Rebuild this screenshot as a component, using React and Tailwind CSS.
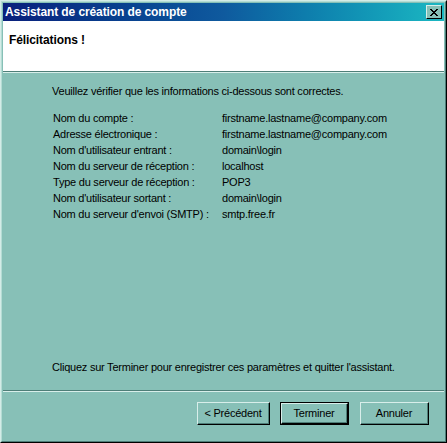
import React from 'react';

const ROWS = [
  ['Nom du compte :', 'firstname.lastname@company.com'],
  ['Adresse électronique :', 'firstname.lastname@company.com'],
  ["Nom d'utilisateur entrant :", 'domain\\login'],
  ['Nom du serveur de réception :', 'localhost'],
  ['Type du serveur de réception :', 'POP3'],
  ["Nom d'utilisateur sortant :", 'domain\\login'],
  ["Nom du serveur d'envoi (SMTP) :", 'smtp.free.fr'],
];

function WinButton({ children, isDefault, wide }) {
  return (
    <div className={isDefault ? 'border border-black' : ''}>
      <div className="border-t border-l border-[#d8eeea] border-r border-b border-r-black border-b-black">
        <div
          className={
            (isDefault ? 'w-[65px] h-[19px] ' : wide ? 'w-[71px] h-[21px] ' : 'w-[67px] h-[21px] ') +
            'flex items-center justify-center border-r border-b border-[#4e7e78] text-black'
          }
        >
          {children}
        </div>
      </div>
    </div>
  );
}

export default function App() {
  return (
    <div
      className="w-[447px] h-[443px] bg-[#87c0b7] border-t border-l border-[#d4ece7] border-r border-b border-r-black border-b-black text-[11px] tracking-[-0.23px] text-black"
      style={{ fontFamily: '"Liberation Sans", Arial, sans-serif' }}
    >
      <div className="w-full h-full border-t border-l border-[#b4dcd4] border-r border-b border-r-[#4e7e78] border-b-[#4e7e78] p-px flex flex-col">
        {/* Title bar */}
        <div className="h-[18px] flex items-center justify-between pl-[2px] pr-[2px] bg-gradient-to-r from-[#0a1f7c] via-[#0f5a9e] to-[#1cb8c2]">
          <span className="text-white font-bold text-[12px] leading-none tracking-[-0.1px]">
            Assistant de création de compte
          </span>
          <div className="w-[16px] h-[14px] bg-[#87c0b7] border-t border-l border-[#d8eeea] border-r border-b border-r-black border-b-black flex items-center justify-center">
            <svg width="8" height="7" viewBox="0 0 8 7" shapeRendering="crispEdges">
              <path d="M0 0h2v1H0zM6 0h2v1H6zM1 1h2v1H1zM5 1h2v1H5zM2 2h4v1H2zM3 3h2v1H3zM2 4h4v1H2zM1 5h2v1H1zM5 5h2v1H5zM0 6h2v1H0zM6 6h2v1H6z" fill="#000" />
            </svg>
          </div>
        </div>

        {/* Header */}
        <div className="h-[51px] bg-white pl-[6px] pt-[10px] border-b border-[#4e7e78]">
          <div className="font-bold text-[12px] tracking-[-0.1px]">Félicitations !</div>
        </div>
        <div className="h-px bg-[#d8eeea]" />

        {/* Body */}
        <div className="flex-1 flex flex-col pl-[49px] pt-[10px]">
          <div>Veuillez vérifier que les informations ci-dessous sont correctes.</div>
          <div className="mt-[10px] grid grid-cols-[169px_1fr] pl-[1px]">
            {ROWS.map(([label, value]) => (
              <React.Fragment key={label}>
                <div className="h-[16px] leading-[16px]">{label}</div>
                <div className="h-[16px] leading-[16px]">{value}</div>
              </React.Fragment>
            ))}
          </div>
          <div className="mt-auto mb-[15px]">
            Cliquez sur Terminer pour enregistrer ces paramètres et quitter l'assistant.
          </div>
        </div>

        {/* Footer */}
        <div className="h-px bg-[#4e7e78]" />
        <div className="h-px bg-[#d8eeea]" />
        <div className="h-[48px] flex justify-end items-start pt-[10px] pr-[15px]">
          <WinButton wide>&lt; Précédent</WinButton>
          <div className="ml-[10px]">
            <WinButton isDefault>Terminer</WinButton>
          </div>
          <div className="ml-[11px]">
            <WinButton>Annuler</WinButton>
          </div>
        </div>
      </div>
    </div>
  );
}
